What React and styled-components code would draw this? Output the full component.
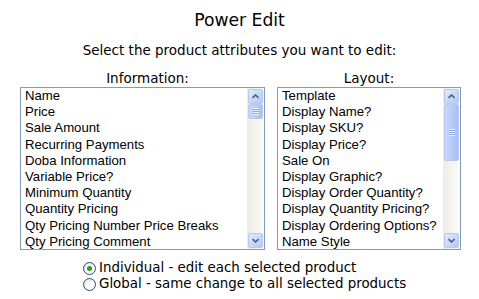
import React from "react";
import styled, { createGlobalStyle } from "styled-components";

const GlobalStyle = createGlobalStyle`
  body {
    margin: 0;
    background: #ffffff;
    font-family: "DejaVu Sans", Verdana, sans-serif;
    color: #000000;
  }
`;

const infoItems = [
  "Name",
  "Price",
  "Sale Amount",
  "Recurring Payments",
  "Doba Information",
  "Variable Price?",
  "Minimum Quantity",
  "Quantity Pricing",
  "Qty Pricing Number Price Breaks",
  "Qty Pricing Comment",
];

const layoutItems = [
  "Template",
  "Display Name?",
  "Display SKU?",
  "Display Price?",
  "Sale On",
  "Display Graphic?",
  "Display Order Quantity?",
  "Display Quantity Pricing?",
  "Display Ordering Options?",
  "Name Style",
];

const Page = styled.div`
  width: 479px;
  height: 299px;
  display: flex;
  flex-direction: column;
  align-items: center;
  padding-top: 10px;
  box-sizing: border-box;
`;

const Title = styled.h1`
  margin: 0;
  font-size: 17.2px;
  font-weight: normal;
  line-height: 20px;
`;

const Subtitle = styled.p`
  margin: 12px 0 0;
  font-size: 13.5px;
  line-height: 16px;
`;

const Columns = styled.div`
  display: flex;
  gap: 12px;
  margin-top: 12px;
  align-self: flex-start;
  margin-left: 20px;
`;

const Column = styled.div`
  display: flex;
  flex-direction: column;
  width: ${(p) => p.$width}px;
`;

const Label = styled.div`
  font-size: 13.5px;
  line-height: 16px;
  text-align: center;
  padding-left: ${(p) => p.$shift}px;
  margin-bottom: 1px;
  white-space: nowrap;
`;

const ListBox = styled.div`
  display: flex;
  height: 163px;
  border: 1px solid #7f9db9;
  background: #ffffff;
  box-sizing: border-box;
`;

const Options = styled.ul`
  flex: 1;
  margin: 0;
  padding: 0 0 0 4px;
  list-style: none;
  overflow: hidden;
  font-family: "Liberation Sans", Arial, sans-serif;
  font-size: 13.2px;
  line-height: 16.2px;
`;

const Option = styled.li`
  white-space: nowrap;
`;

const ScrollBar = styled.div`
  width: 17px;
  display: flex;
  flex-direction: column;
  background: linear-gradient(to right, #eeede5, #fbfbf8);
  padding: 0 1px;
  box-sizing: border-box;
`;

const ArrowButton = styled.div`
  height: 15px;
  border: 1px solid #b8c8f2;
  border-radius: 2px;
  background: linear-gradient(to bottom right, #e1eafe, #b4c8f6);
  display: flex;
  align-items: center;
  justify-content: center;
  box-sizing: border-box;
  margin-top: ${(p) => (p.$down ? "auto" : "1px")};
  margin-bottom: ${(p) => (p.$down ? "1px" : "0")};
`;

const Thumb = styled.div`
  height: ${(p) => p.$height}px;
  border: 1px solid #b8c8f2;
  border-radius: 2px;
  background: linear-gradient(to right, #c9d8fc, #b6caf7 60%, #a9bef4);
  display: flex;
  align-items: center;
  justify-content: center;
  box-sizing: border-box;
`;

const Grip = styled.div`
  width: 6px;
  height: 7px;
  background: repeating-linear-gradient(
    to bottom,
    #eef3fe 0,
    #eef3fe 1px,
    #8da6e3 1px,
    #8da6e3 2px
  );
`;

const Arrow = ({ down }) => (
  <svg width="7" height="5" viewBox="0 0 7 5">
    <path
      d={down ? "M0.5 1 L3.5 4 L6.5 1" : "M0.5 4 L3.5 1 L6.5 4"}
      fill="none"
      stroke="#4d6185"
      strokeWidth="1.6"
    />
  </svg>
);

const Select = ({ items, thumb }) => (
  <ListBox>
    <Options>
      {items.map((item) => (
        <Option key={item}>{item}</Option>
      ))}
    </Options>
    <ScrollBar>
      <ArrowButton>
        <Arrow />
      </ArrowButton>
      <Thumb $height={thumb}>
        <Grip />
      </Thumb>
      <ArrowButton $down>
        <Arrow down />
      </ArrowButton>
    </ScrollBar>
  </ListBox>
);

const Choices = styled.div`
  display: flex;
  flex-direction: column;
  margin-top: 10px;
  align-self: flex-start;
  margin-left: 83px;
`;

const Choice = styled.label`
  display: flex;
  align-items: center;
  gap: 3px;
  font-size: 13.4px;
  line-height: 16px;
  white-space: nowrap;
`;

const Radio = styled.span`
  width: 13px;
  height: 13px;
  flex: none;
  border-radius: 50%;
  border: 1px solid #1c5180;
  background: radial-gradient(circle at 65% 65%, #ffffff 30%, #dcdcd6);
  display: flex;
  align-items: center;
  justify-content: center;
  box-sizing: border-box;

  &::after {
    content: "";
    width: 5px;
    height: 5px;
    border-radius: 50%;
    background: ${(p) => (p.$checked ? "#21a121" : "transparent")};
  }
`;

export default function App() {
  return (
    <>
      <GlobalStyle />
      <Page>
        <Title>Power Edit</Title>
        <Subtitle>Select the product attributes you want to edit:</Subtitle>
        <Columns>
          <Column $width={245}>
            <Label $shift={10}>Information:</Label>
            <Select items={infoItems} thumb={15} />
          </Column>
          <Column $width={184}>
            <Label $shift={-12}>Layout:</Label>
            <Select items={layoutItems} thumb={57} />
          </Column>
        </Columns>
        <Choices>
          <Choice>
            <Radio $checked />
            Individual - edit each selected product
          </Choice>
          <Choice>
            <Radio />
            Global - same change to all selected products
          </Choice>
        </Choices>
      </Page>
    </>
  );
}
